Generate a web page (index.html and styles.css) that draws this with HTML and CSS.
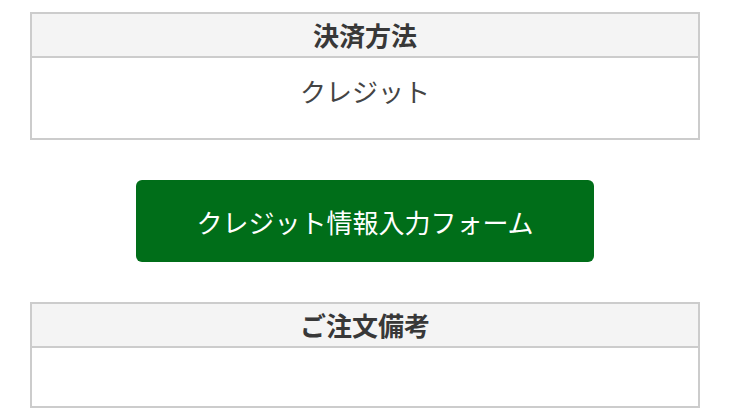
FILE: index.html
```html
<!DOCTYPE html>
<html lang="ja">
<head>
<meta charset="utf-8">
<link rel="stylesheet" href="styles.css">
</head>
<body>
<main class="page">
  <table class="info">
    <thead><tr><th>決済方法</th></tr></thead>
    <tbody><tr><td class="pay">クレジット</td></tr></tbody>
  </table>
  <div class="btn-row">
    <a class="btn" href="#">クレジット情報入力フォーム</a>
  </div>
  <table class="info">
    <thead><tr><th>ご注文備考</th></tr></thead>
    <tbody><tr><td class="note"></td></tr></tbody>
  </table>
</main>
</body>
</html>
```
FILE: styles.css
```css
html, body {
  margin: 0;
  padding: 0;
  background: #fff;
}
body {
  font-family: "Noto Sans CJK JP", "Noto Sans", sans-serif;
  color: #444;
}
.page {
  width: 670px;
  padding: 12px 0 0 30px;
  display: flex;
  flex-direction: column;
  gap: 40px;
}
.info {
  width: 670px;
  border-collapse: collapse;
  table-layout: fixed;
}
.info th,
.info td {
  border: 2px solid #ccc;
  text-align: center;
  padding: 0;
}
.info th {
  background: #f4f4f4;
  color: #383838;
  font-size: 26px;
  font-weight: 700;
  height: 42px;
  line-height: 42px;
}
.info td.pay {
  height: 82px;
  font-size: 26px;
  line-height: 36px;
  vertical-align: top;
  padding-top: 15px;
  box-sizing: border-box;
  color: #444;
}
.info td.note {
  height: 58px;
}
.btn-row {
  display: flex;
  justify-content: center;
}
.btn {
  display: flex;
  align-items: center;
  justify-content: center;
  width: 458px;
  height: 82px;
  background: #006e19;
  color: #fff;
  border-radius: 6px;
  text-decoration: none;
  font-size: 26px;
}
```
